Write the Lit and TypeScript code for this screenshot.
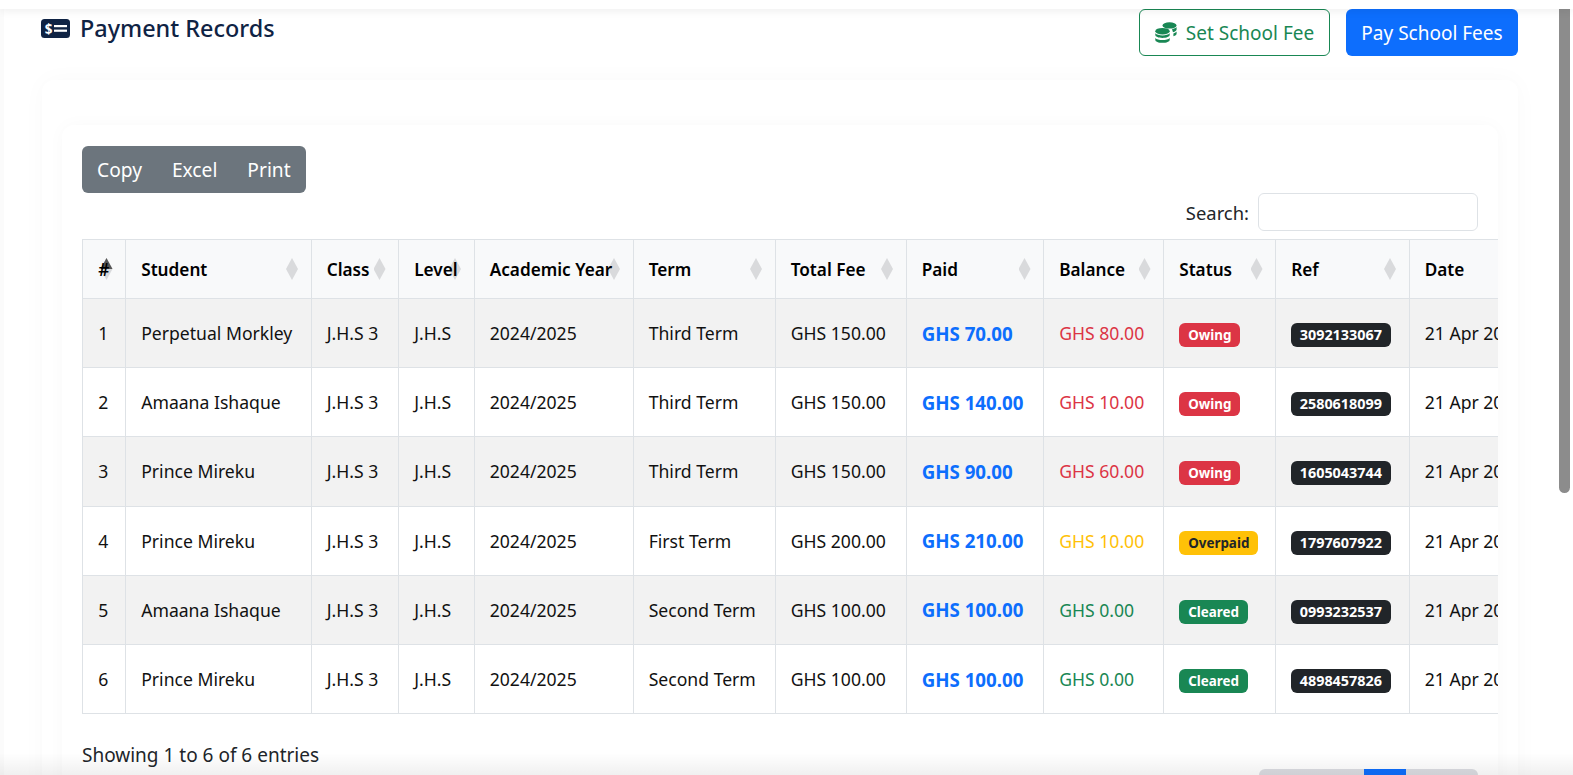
import { LitElement, html, css, svg } from "lit";
import { customElement } from "lit/decorators.js";

type Rec = {
  name: string;
  term: string;
  total: string;
  paid: string;
  balance: string;
  status: "Owing" | "Overpaid" | "Cleared";
  ref: string;
};

const RECORDS: Rec[] = [
  { name: "Perpetual Morkley", term: "Third Term", total: "150.00", paid: "70.00", balance: "80.00", status: "Owing", ref: "3092133067" },
  { name: "Amaana Ishaque", term: "Third Term", total: "150.00", paid: "140.00", balance: "10.00", status: "Owing", ref: "2580618099" },
  { name: "Prince Mireku", term: "Third Term", total: "150.00", paid: "90.00", balance: "60.00", status: "Owing", ref: "1605043744" },
  { name: "Prince Mireku", term: "First Term", total: "200.00", paid: "210.00", balance: "10.00", status: "Overpaid", ref: "1797607922" },
  { name: "Amaana Ishaque", term: "Second Term", total: "100.00", paid: "100.00", balance: "0.00", status: "Cleared", ref: "0993232537" },
  { name: "Prince Mireku", term: "Second Term", total: "100.00", paid: "100.00", balance: "0.00", status: "Cleared", ref: "4898457826" },
];

const COLUMNS = ["#", "Student", "Class", "Level", "Academic Year", "Term", "Total Fee", "Paid", "Balance", "Status", "Ref", "Date"];
const WIDTHS = [43, 185.5, 87.5, 75.5, 159, 142, 131, 137.5, 120, 112, 133.5, 130];

const moneyIcon = svg`<svg class="title-icon" viewBox="0 0 29 19" width="29" height="19">
  <rect width="29" height="19" rx="3.5" fill="#0f2344"></rect>
  <rect x="13" y="6" width="13" height="2.2" fill="#fff"></rect>
  <rect x="13" y="10.6" width="13" height="2.2" fill="#fff"></rect>
  <text x="7.5" y="14.5" font-size="13.5" font-weight="700" text-anchor="middle" fill="#fff" font-family="Noto Sans, sans-serif">$</text>
</svg>`;

const coinsIcon = svg`<svg class="coins" viewBox="0 0 22 21" width="22" height="21" fill="#198754">
  <ellipse cx="14.5" cy="3.4" rx="7" ry="3.2"></ellipse>
  <path d="M17 7.2c2-.3 4-1.1 4.6-2.1v2.3c0 1.2-1.4 2.2-3.6 2.8z"></path>
  <path d="M18.4 11.4c1.5-.4 2.7-1 3.2-1.8v2.2c0 1-1.2 1.9-3.2 2.5z"></path>
  <ellipse cx="7.5" cy="9.2" rx="7.2" ry="3.3"></ellipse>
  <path d="M.3 11.2c1.2 1.4 4 2.2 7.2 2.2s6-.8 7.2-2.2v1.9c0 1.6-3.2 2.9-7.2 2.9S.3 14.7.3 13.1z"></path>
  <path d="M.3 15.9c1.2 1.4 4 2.2 7.2 2.2s6-.8 7.2-2.2v2c0 1.6-3.2 2.9-7.2 2.9S.3 19.5.3 17.9z"></path>
</svg>`;

@customElement("app-root")
export class AppRoot extends LitElement {
  static styles = css`
    :host {
      display: block;
      height: 775px;
      overflow: hidden;
      background: #fff;
      color: #212529;
      font-family: "Noto Sans", "Open Sans", sans-serif;
      font-size: 17.6px;
    }
    .page {
      position: relative;
      box-sizing: border-box;
      height: 775px;
      overflow: hidden;
      padding: 9px 55px 0 42px;
      box-shadow: inset 4px 0 0 #fbfbfb;
    }
    .topbar {
      position: absolute;
      left: 0;
      right: 0;
      top: 0;
      height: 9px;
      background: #fff;
      box-shadow: 0 2px 8px rgba(0, 0, 0, 0.07);
      z-index: 3;
    }
    .bottombar {
      position: absolute;
      left: 0;
      right: 0;
      bottom: 0;
      height: 22px;
      background: linear-gradient(to bottom, rgba(0, 0, 0, 0), rgba(0, 0, 0, 0.06));
      z-index: 3;
    }
    .scroll-thumb {
      position: absolute;
      left: 1559px;
      top: 0;
      width: 11px;
      height: 493px;
      background: #8c8c8c;
      border-radius: 0 0 6px 6px;
      z-index: 2;
    }
    .head {
      display: flex;
      align-items: flex-start;
      height: 47px;
      margin-bottom: 24px;
    }
    .title {
      display: flex;
      align-items: center;
      gap: 10px;
      margin: 0 auto 0 -1px;
      height: 38px;
      font-size: 23.4px;
      font-weight: 500;
      color: #0f2344;
    }
    .btn {
      display: inline-flex;
      align-items: center;
      justify-content: center;
      box-sizing: border-box;
      height: 47px;
      border-radius: 6px;
      font-size: 19px;
    }
    .btn-fee {
      width: 191px;
      gap: 9px;
      border: 1px solid #198754;
      color: #198754;
      margin-right: 16px;
    }
    .btn-pay {
      width: 172px;
      background: #0d6efd;
      color: #fff;
    }
    .outer {
      box-sizing: border-box;
      width: 1476px;
      height: 800px;
      padding: 45px 20px 0;
      border-radius: 12px;
      background: #fff;
      box-shadow: 0 0 24px rgba(0, 0, 0, 0.028);
    }
    .inner {
      padding: 21px 0 0 20px;
      border-radius: 12px;
      background: #fff;
      box-shadow: 0 0 18px rgba(0, 0, 0, 0.028);
      overflow: hidden;
      height: 700px;
    }
    .tools {
      display: inline-flex;
      height: 47px;
      padding: 0 15px;
      gap: 30px;
      align-items: center;
      border-radius: 6px;
      background: #6c757d;
      color: #fff;
      font-size: 19.2px;
    }
    .toolbar {
      height: 47px;
    }
    .search {
      display: flex;
      justify-content: flex-end;
      align-items: center;
      gap: 9px;
      height: 38px;
      padding-right: 20px;
      margin-bottom: 8px;
      font-size: 18.4px;
    }
    .search-box {
      box-sizing: border-box;
      width: 220px;
      height: 38px;
      border: 1px solid #dee2e6;
      border-radius: 6px;
      background: #fff;
    }
    .table-wrap {
      overflow: hidden;
    }
    table {
      table-layout: fixed;
      border-collapse: collapse;
      width: 1456px;
      color: #111;
    }
    th,
    td {
      box-sizing: border-box;
      border: 1px solid #dee2e6;
      padding: 0 15px 0 15.2px;
      white-space: nowrap;
      text-align: left;
    }
    th {
      position: relative;
      height: 59px;
      background: #f8f9fa;
      font-size: 17.2px;
      font-weight: 600;
      color: #000;
    }
    th span {
      position: relative;
      z-index: 2;
    }
    th::after {
      content: "";
      position: absolute;
      right: 12.5px;
      top: 18px;
      width: 12px;
      height: 22px;
      background: #d9dadc;
      clip-path: polygon(50% 0, 100% 50%, 50% 100%, 0 50%);
    }
    th.sorted::before {
      content: "";
      position: absolute;
      right: 12.5px;
      top: 18px;
      width: 12px;
      height: 11px;
      background: #555;
      clip-path: polygon(50% 0, 100% 100%, 0 100%);
      z-index: 1;
    }
    td {
      height: 69.2px;
    }
    tbody tr:nth-child(odd) td {
      background: #f2f2f2;
    }
    .paid {
      color: #0d6efd;
      font-size: 18.7px;
      font-weight: 700;
    }
    .bal-Owing {
      color: #dc3545;
    }
    .bal-Overpaid {
      color: #ffc107;
    }
    .bal-Cleared {
      color: #198754;
    }
    .badge {
      display: inline-block;
      margin-top: 3px;
      padding: 0 9px;
      height: 24px;
      line-height: 24px;
      border-radius: 6px;
      font-size: 13.4px;
      font-weight: 700;
      color: #fff;
      vertical-align: middle;
    }
    .badge-Owing {
      background: #dc3545;
    }
    .badge-Overpaid {
      background: #ffc107;
      color: #212529;
    }
    .badge-Cleared {
      background: #198754;
    }
    .badge-ref {
      padding: 0 8.5px;
      font-size: 14.4px;
      background: #212529;
    }
    .foot {
      display: flex;
      justify-content: space-between;
      padding: 28px 20px 0 0;
      font-size: 19px;
    }
    .pager {
      display: flex;
      width: 219px;
      height: 40px;
      margin-top: 27px;
      border-radius: 6px;
      overflow: hidden;
      background: #dcdde2;
    }
    .pager b {
      width: 42px;
      margin-left: 105px;
      background: #0d6efd;
    }
  `;

  render() {
    return html`
      <div class="page">
        <div class="topbar"></div>
        <div class="scroll-thumb"></div>
        <div class="head">
          <h4 class="title">${moneyIcon}<span>Payment Records</span></h4>
          <div class="btn btn-fee">${coinsIcon}<span>Set School Fee</span></div>
          <div class="btn btn-pay">Pay School Fees</div>
        </div>
        <div class="outer">
          <div class="inner">
            <div class="toolbar">
              <div class="tools"><span>Copy</span><span>Excel</span><span>Print</span></div>
            </div>
            <div class="search">
              <span>Search:</span>
              <div class="search-box"></div>
            </div>
            <div class="table-wrap">
              <table>
                <colgroup>
                  ${WIDTHS.map((w) => html`<col style="width:${w}px" />`)}
                </colgroup>
                <thead>
                  <tr>
                    ${COLUMNS.map(
                      (c, i) =>
                        html`<th class=${i === 0 ? "sorted" : ""}><span>${c}</span></th>`
                    )}
                  </tr>
                </thead>
                <tbody>
                  ${RECORDS.map(
                    (r, i) => html`
                      <tr>
                        <td>${i + 1}</td>
                        <td>${r.name}</td>
                        <td>J.H.S 3</td>
                        <td>J.H.S</td>
                        <td>2024/2025</td>
                        <td>${r.term}</td>
                        <td>GHS ${r.total}</td>
                        <td class="paid">GHS ${r.paid}</td>
                        <td class="bal-${r.status}">GHS ${r.balance}</td>
                        <td><span class="badge badge-${r.status}">${r.status}</span></td>
                        <td><span class="badge badge-ref">${r.ref}</span></td>
                        <td>21 Apr 2025</td>
                      </tr>
                    `
                  )}
                </tbody>
              </table>
            </div>
            <div class="foot">
              <span>Showing 1 to 6 of 6 entries</span>
              <div class="pager"><b></b></div>
            </div>
          </div>
        </div>
        <div class="bottombar"></div>
      </div>
    `;
  }
}
